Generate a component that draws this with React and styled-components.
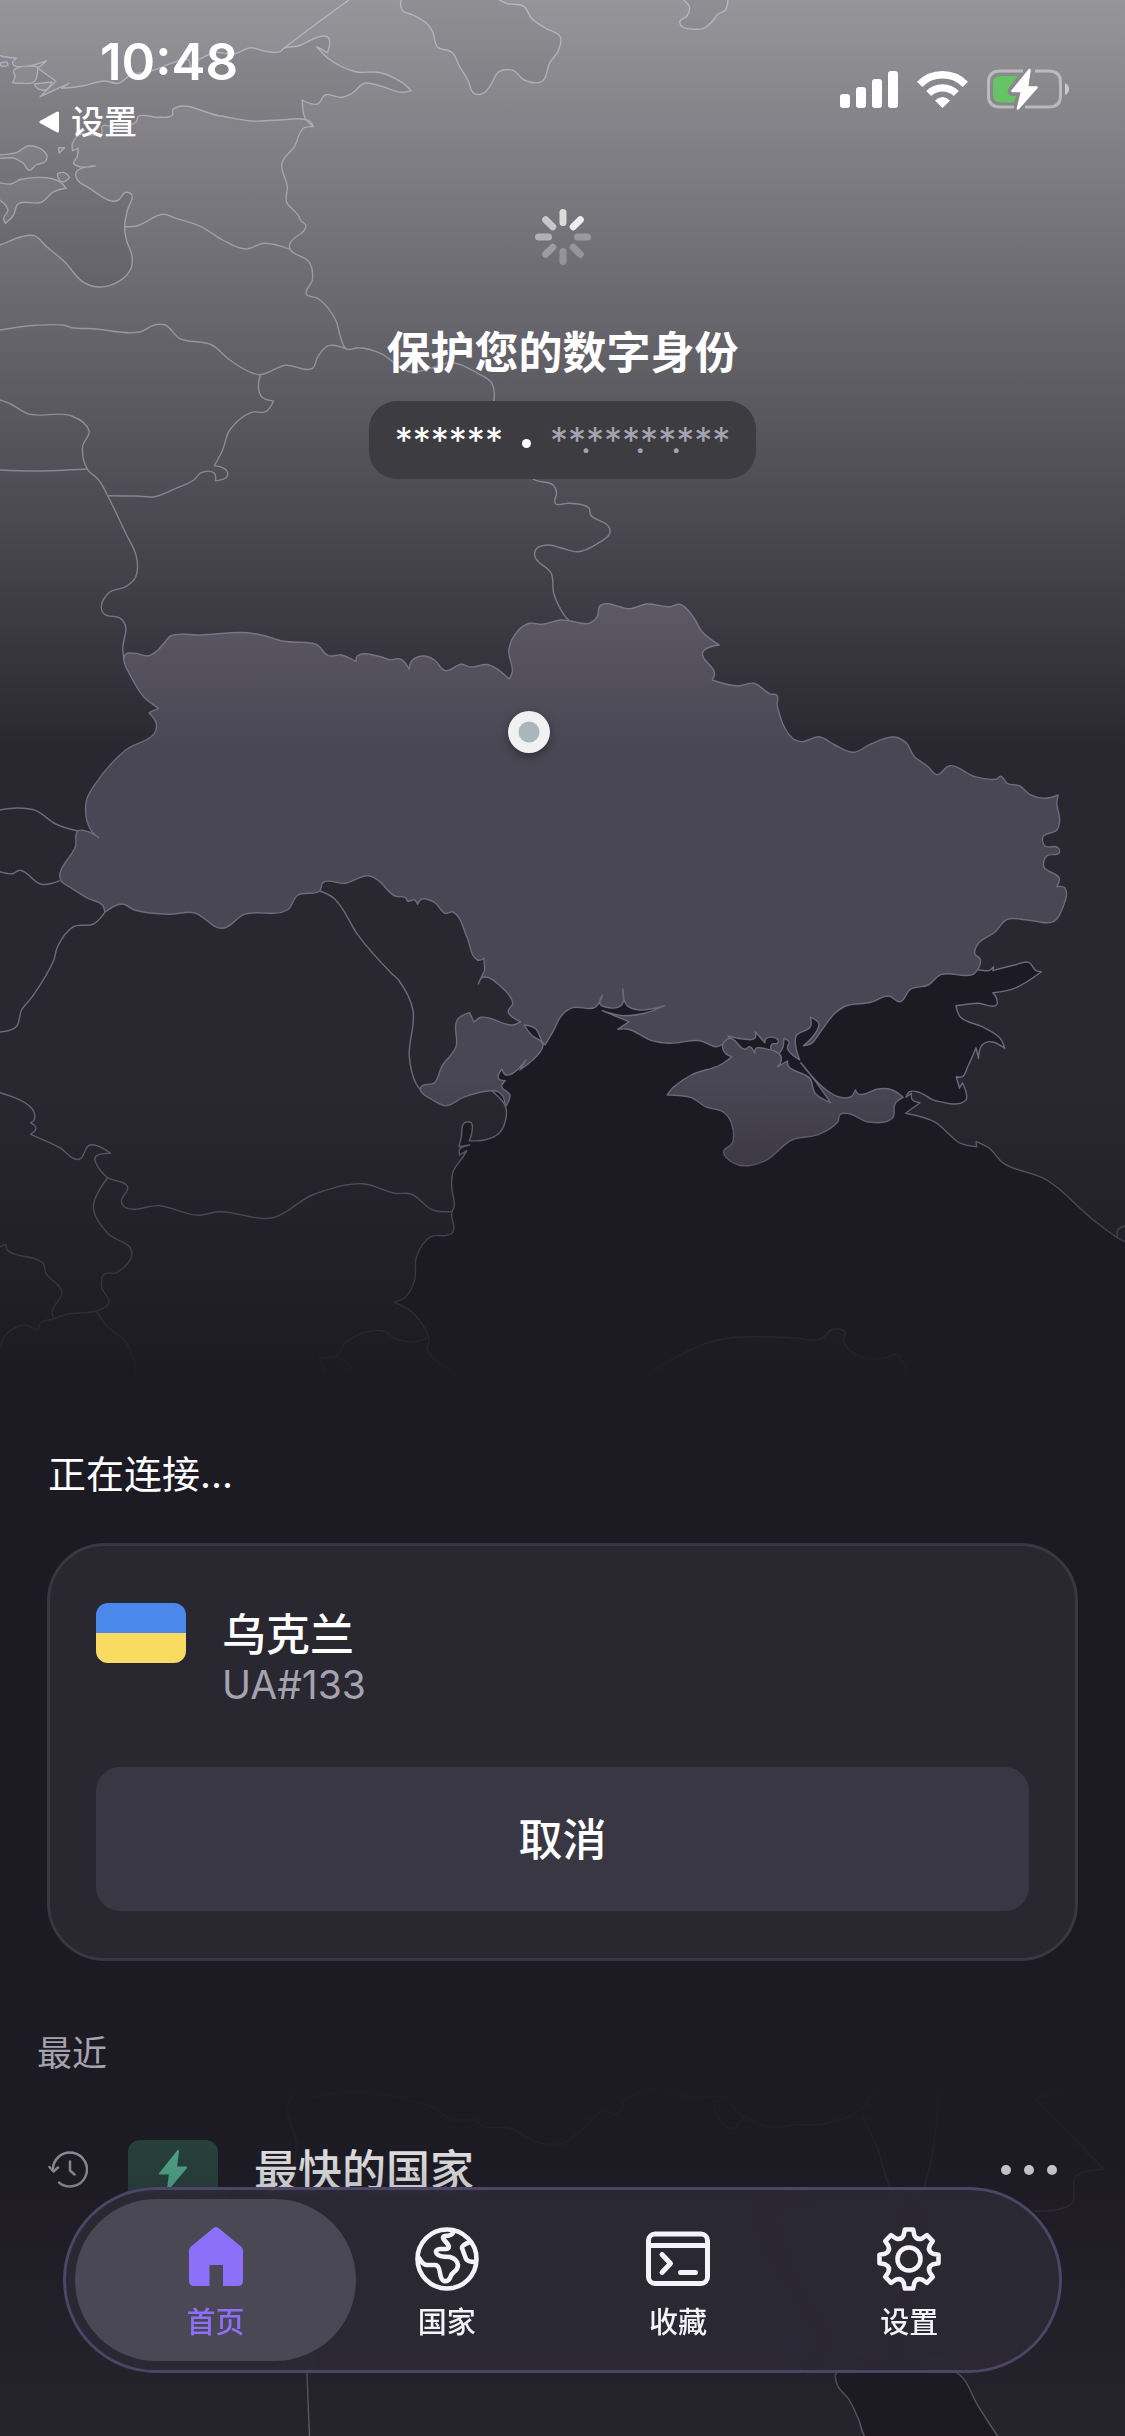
import React from "react";
import styled, { createGlobalStyle } from "styled-components";

const color = {
  sea: "#1c1a23",
  land: "#292730",
  active: "#4a4754",
  border: "#6d697e",
  card: "#292730",
  cardEdge: "#393744",
  button: "#3a3744",
  muted: "#a5a3b0",
  accent: "#8d70f9",
};

const GlobalStyle = createGlobalStyle`
  * { box-sizing: border-box; }
  body {
    margin: 0;
    background: ${color.sea};
    color: #fff;
    font-family: Inter, "Noto Sans CJK SC", sans-serif;
  }
  button {
    margin: 0;
    padding: 0;
    border: 0;
    background: none;
    color: inherit;
    font: inherit;
    cursor: pointer;
  }
  h1, h2, p { margin: 0; }
  svg { display: block; }
`;

/* ---------- Map ---------- */

// Sheet origins on the map; sheet units are finer than map units.
const sheets = {
  A: [0, 0],
  B: [562, 0],
  C: [0, 500],
  D: [562, 500],
  E: [0, 960],
  F: [562, 960],
  G: [0, 2000],
  H: [562, 2000],
};

function project(text) {
  const out = [];
  let origin = [0, 0];
  let pending = null;
  for (const token of text.trim().split(/\s+/)) {
    if (sheets[token]) {
      origin = sheets[token];
    } else if (pending === null) {
      pending = Number(token);
    } else {
      out.push([origin[0] + pending / 2.785, origin[1] + Number(token) / 3]);
      pending = null;
    }
  }
  return out;
}

// Rounded curve through the points; sharp turns stay sharp.
function curve(text, closed) {
  const pts = project(text);
  const n = pts.length;
  const at = (i) => (closed ? pts[(i + n) % n] : pts[Math.max(0, Math.min(n - 1, i))]);
  const tangent = (i) => {
    const [p, c, q] = [at(i - 1), at(i), at(i + 1)];
    const a = [c[0] - p[0], c[1] - p[1]];
    const b = [q[0] - c[0], q[1] - c[1]];
    const la = Math.hypot(a[0], a[1]);
    const lb = Math.hypot(b[0], b[1]);
    if (!la || !lb) return [0, 0];
    const cos = (a[0] * b[0] + a[1] * b[1]) / (la * lb);
    if (cos < -0.1) return [0, 0];
    const d = [a[0] / la + b[0] / lb, a[1] / la + b[1] / lb];
    const ld = Math.hypot(d[0], d[1]);
    return [d[0] / ld, d[1] / ld];
  };
  const f = (v) => v.toFixed(1);
  let d = `M${f(pts[0][0])} ${f(pts[0][1])}`;
  for (let i = 0; i < (closed ? n : n - 1); i++) {
    const p = at(i);
    const q = at(i + 1);
    const k = Math.hypot(q[0] - p[0], q[1] - p[1]) / 3;
    const t = tangent(i);
    const u = tangent(i + 1);
    d += `C${f(p[0] + t[0] * k)} ${f(p[1] + t[1] * k)} ${f(q[0] - u[0] * k)} ${f(q[1] - u[1] * k)} ${f(q[0])} ${f(q[1])}`;
  }
  return closed ? d + "Z" : d;
}

const waters = [
  "A -20 160 0 167 45 175 35 190 48 200 130 182 105 205 155 243 112 290 192 250 172 265 230 258 290 243 330 250 360 228 430 210 490 185 525 180 530 200 560 175 600 158 650 162 700 143 735 153 780 155 790 145 830 138 905 108 916 115 912 158 882 140 920 180 990 215 1060 218 1120 248 1145 272 1120 277 1060 258 1015 250 980 280 950 292 905 285 885 312 842 300 850 355 873 380 860 362 780 360 700 363 610 347 482 328 480 345 440 352 384 350 380 365 310 378 285 378 283 400 220 405 202 430 202 452 218 445 215 470 205 490 222 500 265 498 213 515 215 538 250 565 310 603 330 600 350 577 367 585 355 630 347 680 352 720 367 765 365 805 330 845 275 861 230 845 180 785 130 740 95 707 60 710 0 735 -20 740",
  "A 1123 -10 1120 30 1150 45 1190 72 1205 95 1218 140 1260 158 1280 200 1303 240 1320 280 1345 280 1365 258 1390 215 1430 212 1460 240 1510 244 1530 190 1555 152 1560 110 1520 85 1480 55 1460 20 1410 10 1380 -5",
  "B 330 -8 355 22 348 48 328 65 335 80 360 87 395 85 415 68 435 42 455 30 462 -8",
  "E 1408 440 1408 480 1390 520 1350 540 1307 542 1315 510 1312 488 1292 490 1285 530 1278 560 1308 555 1280 568 1280 585 1300 572 1290 590 1262 635 1258 680 1265 740 1258 758 1262 815 1245 826 1200 830 1160 890 1155 960 1130 1010 1098 1027 1140 1050 1190 1120 1195 1145 1190 1165 1270 1245 1350 1330 F 100 1330 235 1245 320 1190 400 1150 480 1132 540 1130 640 1133 720 1137 755 1108 787 1115 785 1145 820 1185 880 1198 918 1187 930 1184 962 1237 1000 1330 1700 1330 1700 900 1568 845 1545 832 1480 780 1350 660 1230 610 1190 565 1153 545 1155 560 1110 550 1080 525 1040 487 957 460 997 428 975 418 973 400 958 412 968 395 995 397 1040 422 1125 420 1125 395 1115 368 1107 385 1098 350 1115 350 1130 320 1153 263 1160 295 1170 255 1195 245 1233 265 1220 235 1170 200 1110 172 1097 137 1160 130 1210 135 1210 115 1200 98 1260 85 1335 35 1320 32 1300 7 1260 15 1200 32 1202 20 1190 31 1160 30 1120 20 942 60 600 60 60 60 E 1540 60 1460 180 1440 280 1350 350",
  "H 765 1118 767 1155 800 1200 825 1255 852 1320 1220 1320 1160 1220 1098 1118",
];

const islands = [
  "A -20 465 0 465 45 458 82 437 130 465 125 485 100 495 82 511 65 490 40 475 -20 467",
  "A -20 553 30 552 60 538 140 535 170 548 184 565 150 575 115 607 50 612 38 645 15 670 10 655 22 630 0 600 -20 590",
  "A 38 212 105 200 95 245 60 250 35 248 42 228",
  "A 160 520 180 518 194 532 178 545 165 540",
  "A 163 443 180 443 165 459",
  "A 95 252 145 246 130 268 105 266",
  "A 0 190 20 187 22 196 4 198",
];

const ukraine =
  "C 345 480 350 462 375 460 415 467 440 450 460 425 475 408 560 405 690 398 740 408 790 424 870 430 885 436 915 467 950 465 992 485 995 468 1060 470 1085 479 1115 477 1140 508 1147 482 1180 468 1210 480 1240 512 1285 493 1310 501 1360 494 1418 537 1427 515 1417 450 1440 395 1475 370 1510 373 1560 360 D 20 362 75 370 98 350 107 316 190 326 235 312 300 320 330 313 365 350 390 395 438 435 392 457 425 520 418 540 490 558 535 550 580 582 598 585 600 620 642 715 670 725 715 710 760 735 812 757 860 732 925 711 960 730 980 768 1020 800 1044 824 1080 797 1150 830 1210 837 1222 829 1240 850 1275 858 1305 885 1345 895 1382 885 1378 910 1386 960 1378 990 1340 1010 1345 1038 1380 1042 1385 1058 1350 1068 1342 1100 1385 1135 1378 1160 1400 1163 1392 1230 1370 1264 1290 1259 1240 1258 1205 1297 1160 1330 1150 1362 1165 1378 1157 1410 1145 1423 1055 1424 1020 1455 970 1468 942 1505 F 910 108 860 127 790 138 760 160 720 215 695 250 672 257 700 228 715 190 692 172 692 200 652 228 662 300 628 265 632 245 618 235 615 262 600 282 583 270 585 252 600 250 600 238 568 236 565 248 538 215 537 235 500 236 462 228 468 235 430 260 385 242 300 250 250 242 185 208 155 208 187 185 112 152 170 167 230 160 285 137 215 150 180 135 169 87 166 135 112 138 105 130 113 105 92 142 30 143 0 165 E 1540 215 1518 255 1512 248 1490 205 1460 195 1480 225 1512 252 1505 275 1448 330 1465 300 1410 345 1398 327 1388 355 1407 362 1397 380 1420 405 1408 440 1400 408 1385 394 1360 393 1290 412 1243 437 1205 420 1170 388 1175 378 1210 368 1230 320 1270 260 1273 180 1308 158 1320 187 1340 172 1430 195 1450 185 1415 155 1428 130 1400 85 1345 52 1332 72 1350 30 C 1350 1410 1348 1375 1330 1380 1300 1310 1262 1236 1240 1240 1210 1207 1175 1197 1163 1213 1155 1200 1135 1203 1130 1193 1100 1188 1050 1138 1025 1127 960 1150 900 1147 890 1173 830 1185 800 1230 680 1243 620 1285 540 1238 470 1243 375 1230 340 1212 292 1237 285 1215 245 1195 200 1165 170 1142 167 1120 210 1040 217 993 245 995 275 1013 250 985 240 905 260 860 350 750 430 700 435 670 415 638 442 625 400 590 365 530";

const crimea =
  "F 468 235 447 255 455 280 473 290 440 315 360 345 310 382 293 405 360 413 400 440 450 457 472 490 474 550 450 575 480 610 520 617 570 600 640 540 715 523 768 485 775 463 800 461 850 485 920 475 928 430 950 412 920 390 880 387 840 403 825 402 817 390 805 410 775 412 730 385 665 308 700 355 748 428 705 400 690 355 630 318 628 303 600 320 608 310 608 285 560 265 540 265 537 280 522 260 510 268";

const borders = [
  "A 790 145 870 80 972 0",
  "A 873 380 845 385 820 440 785 490 800 560 798 605 830 645 838 662 852 677 808 730 808 748 860 785 870 840 853 882 885 895 935 960 948 1010 965 1047 1000 1043 1060 1060 1140 1115 1200 1105 1260 1088 1330 1120 1370 1150 1370 1300 1450 1400 1490 1440 1540 1455 1550 1480 C 1545 0 1548 12 1568 12 D 20 10 75 24 80 45 130 80 133 100 100 130 45 155 0 145 C 1530 135 1495 145 1490 170 1535 220 1542 280 1568 340 D 20 362",
  "A 347 680 380 678 455 643 490 655 560 680 620 720 685 747 735 730 808 748",
  "A 0 990 100 976 180 976 200 983 260 986 390 996 430 975 460 975 500 1015 590 1035 640 1080 700 1118 725 1124 795 1096 870 1105 885 1070 915 1037 965 1047",
  "A 725 1124 720 1165 730 1192 762 1203 740 1235 700 1237 640 1290 620 1350 597 1397 630 1410 632 1430 600 1442 597 1420 560 1418 540 1440 490 1465 430 1490 380 1488 300 1487",
  "A 0 1200 30 1212 80 1242 200 1248 248 1292 230 1340 243 1407 275 1440 300 1487 C 350 100 380 170 378 230 350 260 305 277 282 320 290 342 335 355 350 380 342 440 345 480",
  "A 0 1410 100 1413 243 1407",
  "C 0 930 50 924 100 932 155 972 217 993",
  "C 0 1115 35 1121 55 1111 115 1153 167 1142",
  "C 292 1237 260 1272 205 1280 160 1340 150 1380 E 90 110 60 150 45 200 0 216",
  "C 890 1173 930 1195 1000 1310 1090 1420 E 1110 60 1150 150 1140 290 1158 370 1170 388",
  "E 0 398 90 447 95 480 85 488 100 505 85 523 165 562 220 598 250 555 308 580 265 592 270 615 300 653 355 680 338 725 350 743 445 737 550 766 610 755 760 773 870 705 1010 671 1100 700 1145 702 1205 750 1258 755",
  "E 300 653 260 740 300 820 367 875 325 938 290 943 283 980 303 1030 268 1053 185 1063 150 1077 145 1055 172 995 128 940 120 910 20 870 15 855 0 862",
  "E 150 1077 110 1092 107 1107 70 1095 20 1120 0 1160",
  "E 268 1053 300 1100 350 1145 370 1190 378 1245",
  "E 1187 1135 1150 1145 1100 1135 1065 1112 965 1145 935 1190 890 1190 905 1240",
  "E 935 1190 965 1205 980 1240",
  "F 1568 797 1548 810 1547 832",
  "G 845 240 800 320 825 430 820 500 850 900 855 1120 862 1310",
  "G 870 290 1000 275 1100 290 1200 320 1260 358 1320 360 1350 380 1420 385 1500 428 1568 430 H 60 385 120 330 150 345 180 295 300 270 360 295 440 290 500 345 570 380 650 375 740 370 830 330 890 230",
  "H 425 300 430 345 475 385 505 350",
  "H 835 345 880 450 915 562 970 620",
  "H 1050 220 1040 400 1008 562 980 620",
  "H 1510 235 1315 295 1510 508 1430 530 1420 610 1315 633",
];

const gulfs = [
  "H 680 580 600 590 565 650 590 740 640 850 690 940 735 1010 725 1060 660 1100",
  "H 972 610 975 680 965 870 930 960 930 1040 955 1100",
];

const MapArt = styled.svg`
  grid-area: 1 / 1;
  width: 100%;
  height: auto;
`;

function WorldMap() {
  return (
    <MapArt viewBox="0 0 1125 2436" role="img" aria-label="乌克兰地图">
      <defs>
        <linearGradient id="glow" x1="0" y1="0" x2="0" y2="1">
          <stop offset="0" stopColor="#fff" stopOpacity="0.51" />
          <stop offset="1" stopColor="#fff" stopOpacity="0" />
        </linearGradient>
        <linearGradient id="fadeOut" x1="0" y1="0" x2="0" y2="1">
          <stop offset="0" stopColor={color.sea} stopOpacity="0" />
          <stop offset="1" stopColor={color.sea} />
        </linearGradient>
        <linearGradient id="fadeIn" x1="0" y1="0" x2="0" y2="1">
          <stop offset="0" stopColor={color.sea} />
          <stop offset="0.25" stopColor={color.sea} stopOpacity="0.88" />
          <stop offset="1" stopColor={color.sea} stopOpacity="0" />
        </linearGradient>
        <filter id="soft" x="-50%" y="-50%" width="200%" height="200%">
          <feGaussianBlur stdDeviation="5" />
        </filter>
      </defs>
      <rect width="1125" height="2436" fill={color.land} />
      <g stroke={color.border} strokeWidth="1.4" strokeLinejoin="round">
        {waters.map((d) => (
          <path key={d} d={curve(d, true)} fill={color.sea} />
        ))}
        {islands.map((d) => (
          <path key={d} d={curve(d, true)} fill={color.land} />
        ))}
        {borders.map((d) => (
          <path key={d} d={curve(d, false)} fill="none" />
        ))}
        <path d={curve(ukraine, true)} fill={color.active} />
        <path d={curve(crimea, true)} fill={color.active} />
      </g>
      {gulfs.map((d) => (
        <path key={d} d={curve(d, false)} fill="none" stroke={color.sea} strokeWidth="17" />
      ))}
      <rect width="1125" height="750" fill="url(#glow)" />
      <rect y="1080" width="1125" height="300" fill="url(#fadeOut)" />
      <rect y="1380" width="1125" height="691" fill={color.sea} />
      <rect y="2070" width="1125" height="366" fill="url(#fadeIn)" />
      <circle cx="529" cy="735" r="22" fill="#000" opacity="0.3" filter="url(#soft)" />
      <circle cx="529" cy="732" r="21" fill="#f1f1f1" />
      <circle cx="529" cy="732" r="10.5" fill="#a9b7bc" />
    </MapArt>
  );
}

/* ---------- Page frame ---------- */

const Page = styled.div`
  display: grid;
  grid-template-columns: minmax(0, 1fr);
  min-height: 100vh;
  overflow: hidden;
`;

const Content = styled.div`
  grid-area: 1 / 1;
  position: relative;
  display: flex;
  flex-direction: column;
`;

const Hero = styled.header`
  min-height: 1446px;
  display: flex;
  flex-direction: column;
`;

const StatusBar = styled.div`
  display: flex;
  justify-content: space-between;
  padding: 32px 56px 0 39px;
`;

const ClockColumn = styled.div`
  display: flex;
  flex-direction: column;
  gap: 10px;
`;

const Clock = styled.time`
  padding-left: 61px;
  font-size: 51px;
  line-height: 60px;
  font-weight: 600;
`;

const BackButton = styled.button`
  display: flex;
  align-items: center;
  gap: 11px;
  font-size: 33px;
  line-height: 40px;
  font-weight: 500;
`;

const StatusIcons = styled.div`
  display: flex;
  align-items: center;
  align-self: flex-start;
  gap: 19px;
  padding-top: 36px;
`;

const HeroBody = styled.div`
  display: flex;
  flex-direction: column;
  align-items: center;
  padding-top: 67px;
`;

const Title = styled.h1`
  margin-top: 58px;
  font-size: 44px;
  line-height: 60px;
  font-weight: 700;
`;

const Pill = styled.p`
  display: flex;
  align-items: center;
  gap: 19px;
  height: 78px;
  margin-top: 18px;
  padding: 0 26px;
  border-radius: 28px;
  background: #3d3c40;
  font-size: 36px;
  line-height: 44px;
`;

const MaskedPlace = styled.span`
  color: #fff;
`;

const MaskedIp = styled.span`
  color: ${color.muted};
`;

const Separator = styled.span`
  width: 9px;
  height: 9px;
  margin-top: 6px;
  border-radius: 50%;
  background: #fff;
`;

const ThinDot = styled.span`
  display: inline-flex;
  justify-content: center;
  width: 0;
`;

/* ---------- Connection ---------- */

const StatusText = styled.h2`
  padding: 0 48px;
  font-size: 38px;
  line-height: 56px;
  font-weight: 400;
`;

const Card = styled.section`
  margin: 41px 47px 0;
  padding: 48px 46px 47px;
  border: 3px solid ${color.cardEdge};
  border-radius: 58px;
  background: ${color.card};
`;

const Server = styled.div`
  display: flex;
  gap: 36px;
  padding-top: 9px;
`;

const Flag = styled.div`
  flex: none;
  width: 90px;
  height: 60px;
  border-radius: 12px;
  background: linear-gradient(#4b88ec 50%, #f8db60 50%);
`;

const ServerName = styled.p`
  padding-top: 2px;
  font-size: 44px;
  line-height: 60px;
  font-weight: 500;
`;

const ServerCode = styled.p`
  font-size: 39px;
  line-height: 40px;
  color: ${color.muted};
`;

const CancelButton = styled.button`
  display: block;
  width: 100%;
  height: 144px;
  margin-top: 62px;
  padding-bottom: 4px;
  border-radius: 24px;
  background: ${color.button};
  font-size: 44px;
  font-weight: 500;
`;

/* ---------- Recents ---------- */

const RecentTitle = styled.h2`
  margin-top: 67px;
  padding: 0 37px;
  font-size: 35px;
  line-height: 50px;
  font-weight: 400;
  color: ${color.muted};
`;

const RecentRow = styled.div`
  display: flex;
  align-items: center;
  height: 90px;
  margin-top: 47px;
  padding: 0 68px 0 48px;
`;

const FastBadge = styled.div`
  display: flex;
  align-items: center;
  justify-content: center;
  width: 90px;
  height: 60px;
  margin: 0 36px 0 40px;
  border-radius: 12px;
  background: #29463f;
`;

const RecentName = styled.p`
  flex: 1;
  padding-top: 2px;
  font-size: 44px;
  line-height: 60px;
  font-weight: 500;
`;

const MoreButton = styled.button`
  display: flex;
  gap: 13px;
  padding: 20px 0;
`;

const Dot = styled.span`
  width: 10px;
  height: 10px;
  border-radius: 50%;
  background: #eee;
`;

/* ---------- Tab bar ---------- */

const Footer = styled.footer`
  position: fixed;
  left: 0;
  right: 0;
  bottom: 0;
  padding: 90px 63px 63px;
  background: linear-gradient(rgba(28, 26, 35, 0), rgba(28, 26, 35, 0.25) 90px, rgba(28, 26, 35, 0.2));
`;

const TabBar = styled.nav`
  display: flex;
  height: 186px;
  padding: 0 34px;
  border: 3px solid #4b4666;
  border-radius: 93px;
  background: rgba(44, 42, 54, 0.86);
  backdrop-filter: blur(6px);
`;

const Tab = styled.button`
  position: relative;
  flex: 1;
  display: flex;
  flex-direction: column;
  align-items: center;
  padding-top: 37px;
  gap: 12px;
  font-size: 29px;
  line-height: 40px;
  font-weight: 500;
  color: ${(p) => (p.$active ? color.accent : "#f4f2fa")};

  &::before {
    content: "";
    position: absolute;
    z-index: -1;
    inset: 9px -25px;
    border-radius: 81px;
    background: ${(p) => (p.$active ? "#4a4854" : "transparent")};
  }
`;

/* ---------- Icons ---------- */

const BackArrow = () => (
  <svg width="21" height="22" viewBox="0 0 21 22" aria-hidden="true">
    <path d="M2 11 18.500 2V20Z" fill="#fff" stroke="#fff" strokeWidth="3" strokeLinejoin="round" />
  </svg>
);

const Signal = () => (
  <svg width="58" height="37" viewBox="0 0 58 37" fill="#fff" aria-label="信号">
    <rect x="0" y="23" width="10" height="14" rx="3" />
    <rect x="16" y="16" width="10" height="21" rx="3" />
    <rect x="32" y="8" width="10" height="29" rx="3" />
    <rect x="48" y="0" width="10" height="37" rx="3" />
  </svg>
);

const Wifi = () => (
  <svg width="51" height="37" viewBox="0 0 51 37" fill="none" stroke="#fff" aria-label="无线网络">
    <path d="M2.700 13.300A32 32 0 0 1 48.300 13.300" strokeWidth="7.500" />
    <path d="M11.700 22.500A19.500 19.500 0 0 1 39.300 22.500" strokeWidth="7.300" />
    <path d="M25.500 37 18 29.500Q25.500 22.500 33 29.500Z" fill="#fff" stroke="none" />
  </svg>
);

const Battery = () => (
  <svg width="82" height="42" viewBox="0 0 82 42" aria-label="正在充电">
    <g fill="none" stroke="#fff" strokeOpacity="0.42" strokeWidth="3">
      <path d="M36 3H13.500Q1.500 3 1.500 14V28Q1.500 39 13.500 39H27" />
      <path d="M48 3H61.500Q73.500 3 73.500 14V28Q73.500 39 61.500 39H38" />
    </g>
    <path d="M78 15Q82 17 82 21T78 27Z" fill="#fff" fillOpacity="0.55" />
    <path d="M14 8H31L21 21Q19 28 26 28H29L27 34.500H14Q6 34.500 6 27V15Q6 8 14 8Z" fill="#65c466" />
    <path
      d="M42.500 2 25.500 23H35L31 40.500 49.500 19.500H40Z"
      fill="#fff"
      stroke="#fff"
      strokeWidth="2.500"
      strokeLinejoin="round"
    />
  </svg>
);

const spokeOpacity = [0.75, 0.88, 0.28, 0.26, 0.26, 0.3, 0.45, 0.6];

const Spinner = () => (
  <svg width="56" height="56" viewBox="-28 -28 56 56" role="img" aria-label="正在加载">
    {spokeOpacity.map((opacity, i) => (
      <rect
        key={i}
        x="-3.500"
        y="-28"
        width="7"
        height="17"
        rx="3.500"
        fill="#fff"
        opacity={opacity}
        transform={`rotate(${i * 45})`}
      />
    ))}
  </svg>
);

const HistoryIcon = () => (
  <svg
    width="40"
    height="40"
    viewBox="0 0 40 40"
    fill="none"
    stroke="#a09eaa"
    strokeWidth="2.500"
    strokeLinecap="round"
    strokeLinejoin="round"
    aria-hidden="true"
  >
    <path d="M5 21A17 17 0 1 1 11 32.500" />
    <path d="M1.500 17 5.500 21.500 10 17.500M22 11.500V20.500L26.500 24.500" />
  </svg>
);

const Bolt = () => (
  <svg width="30" height="42" viewBox="0 0 30 42" aria-hidden="true">
    <path
      d="M20 2 2 24.500H12L10 40 28 18.500H18Z"
      fill="#57b896"
      stroke="#57b896"
      strokeWidth="2"
      strokeLinejoin="round"
    />
  </svg>
);

const HomeIcon = () => (
  <svg width="64" height="64" viewBox="0 0 64 64" fill="currentColor" aria-hidden="true">
    <path d="M29.500 1Q32 -1 34.500 1L57 19.500Q59 21 59 24V54Q59 59 54 59H39V38H25.500V59H10Q5 59 5 54V24Q5 21 7 19.500Z" />
  </svg>
);

const GlobeIcon = () => (
  <svg
    width="64"
    height="64"
    viewBox="0 0 64 64"
    fill="none"
    stroke="currentColor"
    strokeWidth="4.600"
    strokeLinecap="round"
    strokeLinejoin="round"
    aria-hidden="true"
  >
    <circle cx="32" cy="32" r="29.500" />
    <path d="M38 6Q36 9 30 9Q26 10 30 14Q37 21 31 22H25Q19 23 22 27Q24 30 35 30Q42 32 43 38Q43 42 39 45Q36 47 35 51Q33 55 29 54Q26 53 25 46Q24 38 20 38H12Q8 38 4 31" />
    <path d="M55 15Q47 18 47 21L51 32Q53 35 60 35" />
  </svg>
);

const TerminalIcon = () => (
  <svg
    width="64"
    height="64"
    viewBox="0 0 64 64"
    fill="none"
    stroke="currentColor"
    strokeWidth="5"
    strokeLinecap="round"
    strokeLinejoin="round"
    aria-hidden="true"
  >
    <rect x="2.500" y="7" width="59" height="49.500" rx="6.500" />
    <path d="M3 18.500H61" strokeLinecap="butt" />
    <path d="M16 27.500 24.500 36.500 16 45.500M34.500 45.500H49.500" />
  </svg>
);

const gearOutline = (() => {
  const point = (r, deg) => {
    const a = (deg * Math.PI) / 180;
    return `${(32 + r * Math.sin(a)).toFixed(2)} ${(32 - r * Math.cos(a)).toFixed(2)}`;
  };
  let d = "";
  for (let i = 0; i < 8; i++) {
    const a = i * 45;
    d += `${i ? "L" : "M"}${point(29.8, a - 8)}L${point(29.8, a + 8)}L${point(24.5, a + 12.5)}Q${point(20, a + 22.5)} ${point(24.5, a + 32.5)}`;
  }
  return d + "Z";
})();

const GearIcon = () => (
  <svg
    width="64"
    height="64"
    viewBox="0 0 64 64"
    fill="none"
    stroke="currentColor"
    strokeWidth="4.600"
    strokeLinejoin="round"
    aria-hidden="true"
  >
    <path d={gearOutline} />
    <circle cx="32" cy="32" r="11.500" />
  </svg>
);

const tabs = [
  { label: "首页", Icon: HomeIcon },
  { label: "国家", Icon: GlobeIcon },
  { label: "收藏", Icon: TerminalIcon },
  { label: "设置", Icon: GearIcon },
];

const maskedIp = ["**", "***", "**", "***"];

export default function App() {
  return (
    <>
      <GlobalStyle />
      <Page>
        <WorldMap />
        <Content>
          <Hero>
            <StatusBar>
              <ClockColumn>
                <Clock>10:48</Clock>
                <BackButton type="button">
                  <BackArrow />
                  设置
                </BackButton>
              </ClockColumn>
              <StatusIcons>
                <Signal />
                <Wifi />
                <Battery />
              </StatusIcons>
            </StatusBar>
            <HeroBody>
              <Spinner />
              <Title>保护您的数字身份</Title>
              <Pill>
                <MaskedPlace>******</MaskedPlace>
                <Separator />
                <MaskedIp>
                  {maskedIp.map((part, i) => (
                    <React.Fragment key={i}>
                      {i > 0 && <ThinDot>.</ThinDot>}
                      {part}
                    </React.Fragment>
                  ))}
                </MaskedIp>
              </Pill>
            </HeroBody>
          </Hero>
          <main>
            <StatusText>正在连接...</StatusText>
            <Card>
              <Server>
                <Flag />
                <div>
                  <ServerName>乌克兰</ServerName>
                  <ServerCode>UA#133</ServerCode>
                </div>
              </Server>
              <CancelButton type="button">取消</CancelButton>
            </Card>
            <RecentTitle>最近</RecentTitle>
            <RecentRow>
              <HistoryIcon />
              <FastBadge>
                <Bolt />
              </FastBadge>
              <RecentName>最快的国家</RecentName>
              <MoreButton type="button" aria-label="更多">
                <Dot />
                <Dot />
                <Dot />
              </MoreButton>
            </RecentRow>
          </main>
        </Content>
      </Page>
      <Footer>
        <TabBar>
          {tabs.map(({ label, Icon }, i) => (
            <Tab key={label} type="button" $active={i === 0}>
              <Icon />
              {label}
            </Tab>
          ))}
        </TabBar>
      </Footer>
    </>
  );
}
